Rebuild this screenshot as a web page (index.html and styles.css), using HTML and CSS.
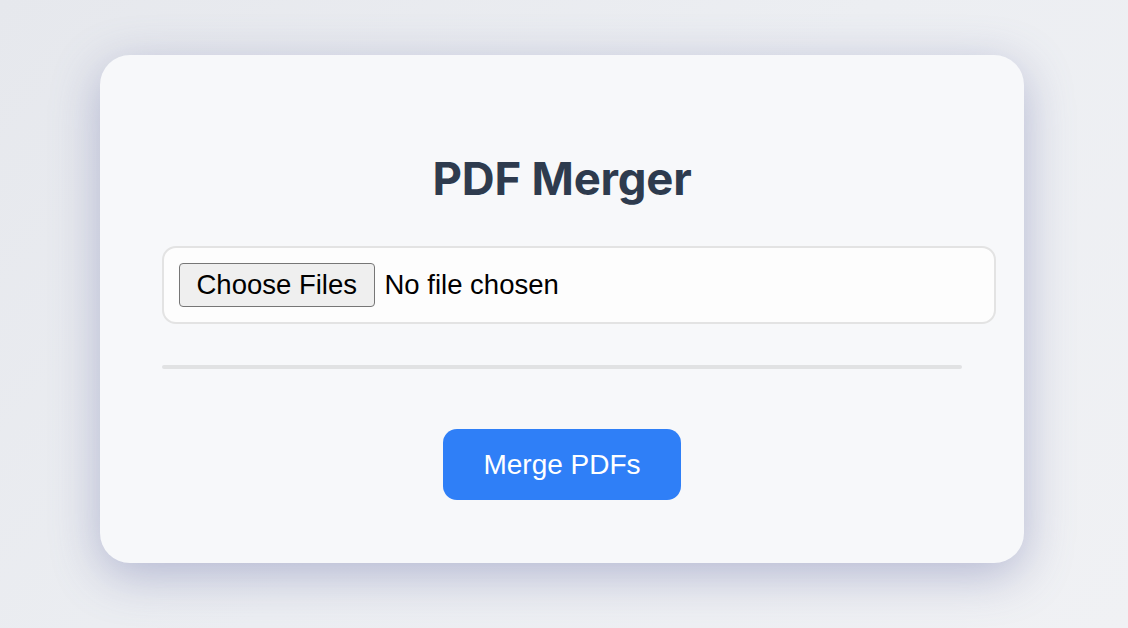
FILE: index.html
```html
<!DOCTYPE html>
<html lang="en">
<head>
<meta charset="utf-8">
<title>PDF Merger</title>
<link rel="stylesheet" href="styles.css">
</head>
<body>
<main class="page">
  <section class="card">
    <h1 class="title">PDF Merger</h1>
    <input class="file-input" type="file" multiple accept="application/pdf">
    <div class="progress"><div class="progress-fill"></div></div>
    <button class="merge-btn" type="button">Merge PDFs</button>
  </section>
</main>
</body>
</html>
```
FILE: styles.css
```css
html, body {
  margin: 0;
  padding: 0;
  height: 100%;
}
body {
  background: linear-gradient(135deg, #e6e8ed 0%, #eceef2 50%, #f0f1f4 100%);
  font-family: "Liberation Sans", Arial, sans-serif;
  overflow: hidden;
}
.page {
  display: flex;
  justify-content: center;
  padding-top: 55px;
  padding-right: 4px;
}
.card {
  box-sizing: border-box;
  width: 924px;
  height: 508px;
  background: #f7f8fa;
  border-radius: 30px;
  padding: 62px 62px;
  box-shadow: 0 12px 48px rgba(110, 118, 170, 0.45);
  display: flex;
  flex-direction: column;
  align-items: flex-start;
}
.title {
  align-self: stretch;
  margin: 35px 0 0;
  text-align: center;
  font-family: Inter, "Liberation Sans", sans-serif;
  font-weight: 700;
  font-size: 45.5px;
  line-height: 54px;
  color: #2e3b4e;
  letter-spacing: -0.2px;
}
.file-input {
  margin-top: 40px;
  width: 800px;
  height: 44px;
  padding: 15px;
  border: 2px solid #e3e3e3;
  border-radius: 14px;
  background: #fdfdfd;
  font-family: "Liberation Sans", Arial, sans-serif;
  font-size: 27.5px;
  color: #000;
}
.file-input::file-selector-button {
  height: 44px;
  padding: 0 16.5px;
  margin-right: 10px;
  border: 1px solid #767676;
  border-radius: 4px;
  background: #efefef;
  font-family: "Liberation Sans", Arial, sans-serif;
  font-size: 27.5px;
  color: #000;
}
.progress {
  margin-top: 41px;
  width: 800px;
  height: 4px;
  border-radius: 2px;
  background: #e1e2e3;
}
.progress-fill {
  width: 0;
  height: 100%;
}
.merge-btn {
  align-self: center;
  margin-top: 60px;
  width: 238px;
  height: 71px;
  border: none;
  border-radius: 14px;
  background: #2f7ff7;
  color: #fff;
  font-family: "Liberation Sans", Arial, sans-serif;
  font-size: 28px;
  cursor: pointer;
}
```
